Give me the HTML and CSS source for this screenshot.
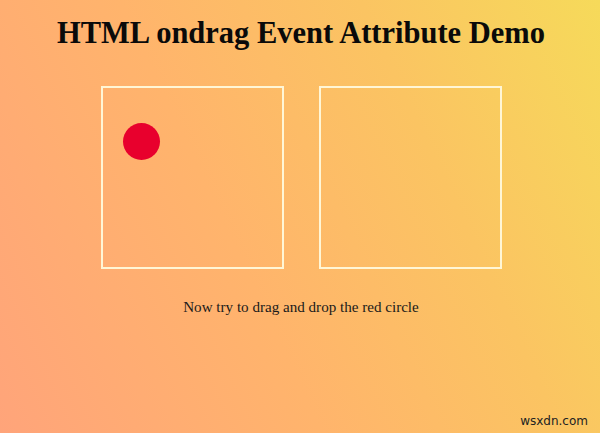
FILE: index.html
```html
<!DOCTYPE html>
<html>
<head>
<meta charset="utf-8">
<link rel="stylesheet" href="styles.css">
</head>
<body>
<main class="page">
  <h1 class="title">HTML ondrag Event Attribute Demo</h1>
  <div class="boxes">
    <div class="box"><div class="circle"></div></div>
    <div class="box"></div>
  </div>
  <p class="hint">Now try to drag and drop the red circle</p>
</main>
<div class="watermark">wsxdn.com</div>
</body>
</html>
```
FILE: styles.css
```css
html, body {
  margin: 0;
  padding: 0;
  width: 600px;
  height: 433px;
  overflow: hidden;
}
body {
  background: linear-gradient(65deg, #ffa47a 0%, #ffb46c 40%, #fbc462 70%, #f6da5a 100%);
  font-family: "Liberation Serif", "Times New Roman", serif;
  color: #111;
  position: relative;
}
.page {
  display: flex;
  flex-direction: column;
  align-items: center;
  padding-left: 2px;
}
.title {
  margin: 16px 0 0 0;
  font-size: 30.5px;
  line-height: 34px;
  font-weight: bold;
  color: #0a0a0a;
}
.boxes {
  display: flex;
  gap: 35px;
  margin-top: 36px;
}
.box {
  box-sizing: border-box;
  width: 183px;
  height: 183px;
  border: 2px solid #fff6d6;
  padding: 35px 0 0 20px;
}
.circle {
  width: 37px;
  height: 37px;
  border-radius: 50%;
  background: #e8002d;
}
.hint {
  margin: 29px 0 0 0;
  font-size: 15.1px;
  line-height: 18px;
  color: #1a1a1a;
}
.watermark {
  position: absolute;
  right: 12px;
  bottom: 5px;
  font-family: "DejaVu Sans", sans-serif;
  font-size: 12px;
  color: #222;
}
```
